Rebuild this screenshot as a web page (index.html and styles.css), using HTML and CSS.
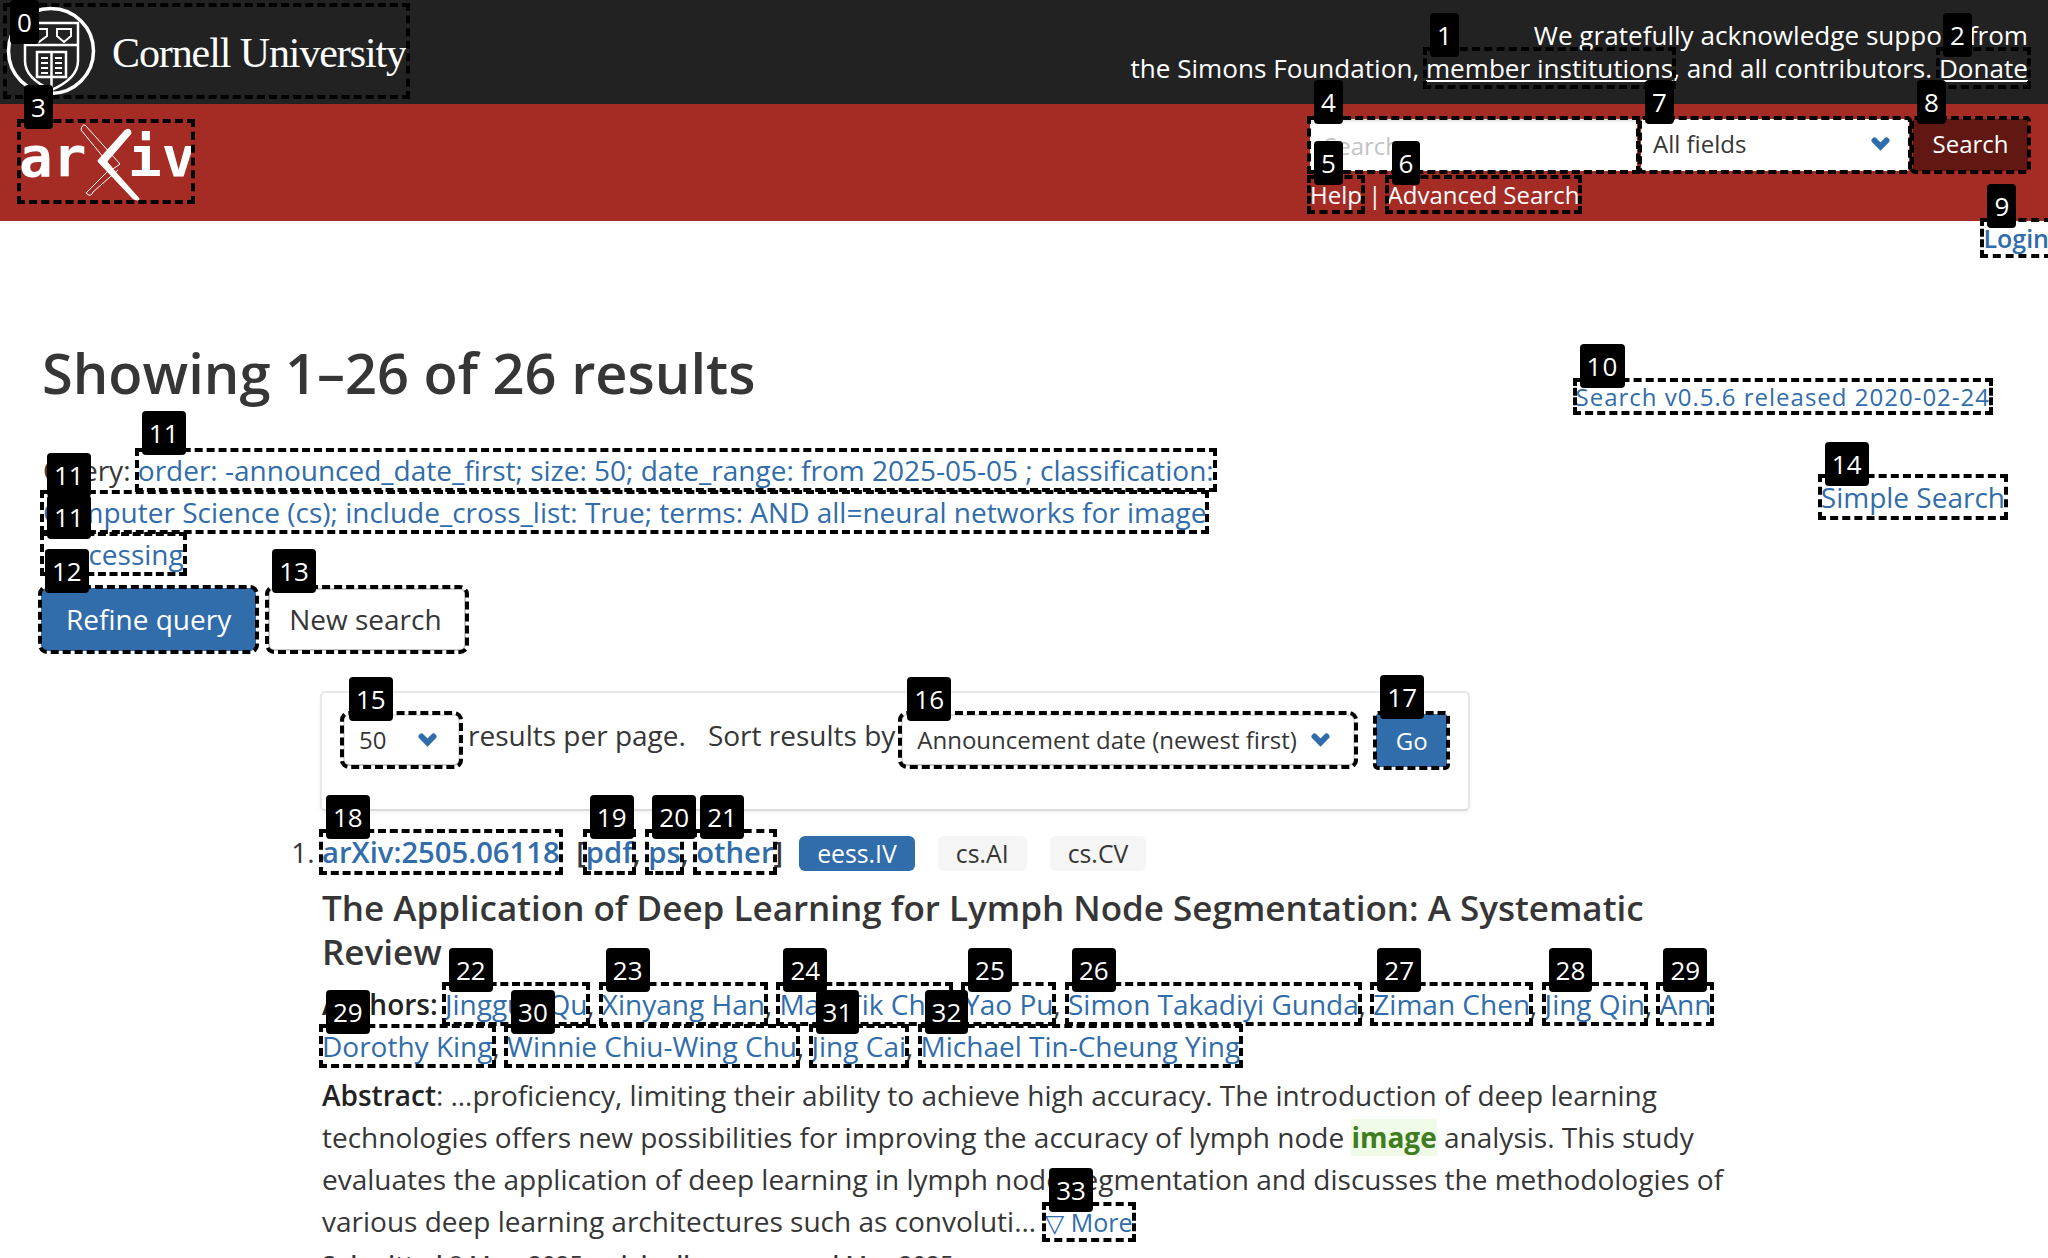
FILE: index.html
```html
<!DOCTYPE html>
<html lang="en">
<head>
    <meta charset="UTF-8">
    <meta name="viewport" content="width=device-width, initial-scale=1.0">
    <title>Search | arXiv e-print repository</title>
    <link rel="stylesheet" href="styles.css">
</head>
<body>
    <header>
        <div class="identity">
            <a class="cornell mark" href="#">
                <b class="badge badge-clamped">0</b>
                <svg class="seal" width="96" height="96" viewBox="0 0 96 96" fill="none" stroke="#fff">
                    <circle cx="48" cy="48" r="42.5" stroke-width="3.5"/>
                    <path d="M22 20H75V58C75 72 62 81 48.500 87C35 81 22 72 22 58Z" stroke-width="2.500"/>
                    <path d="M22 42H75" stroke-width="2.500"/>
                    <path d="M29 26H44V33L36 39L29 33ZM54 26H68V33L61 39L54 33Z" stroke-width="2"/>
                    <path d="M34 49H63V74H34ZM48.500 49V87" stroke-width="2.500"/>
                    <path d="M38 55H45M38 60H45M38 65H45M38 70H45M52 55H59M52 60H59M52 65H59M52 70H59" stroke-width="2"/>
                </svg>
                <span class="cornell-name">Cornell University</span>
            </a>
            <p class="support">
                We gratefully acknowledge support from<br>
                the Simons Foundation, <a class="mark" href="#"><b class="badge">1</b>member institutions</a>, and all contributors. <a class="mark" href="#"><b class="badge">2</b>Donate</a>
            </p>
        </div>
        <div class="masthead">
            <a class="arxiv-logo mark" href="#">
                <b class="badge">3</b>
                <svg class="logo-svg" width="172" height="79" viewBox="0 0 172 79">
                    <text class="logo-letters" x="-1" y="54">ar</text>
                    <text class="logo-letters" x="108" y="54">iv</text>
                    <path d="M65 3L100 42L93 47L61 8Q62 2 65 3ZM92 45L66 71Q71 76 73 70L98 48" fill="none" stroke="#fff" stroke-width="1"/>
                    <path d="M110 11L85 40L118 77L114 76L79 39L106 9Q110 7 110 11Z" fill="#fff" stroke="#fff" stroke-width="3" stroke-linejoin="round"/>
                </svg>
            </a>
            <div class="search-box">
                <form class="search-row">
                    <span class="mark search-field"><b class="badge">4</b><input class="search-input" type="text" placeholder="Search"></span>
                    <div class="select field-select mark"><b class="badge">7</b><span>All fields</span>
                        <svg class="chevron" width="19" height="14" viewBox="0 0 19 14"><path d="M3.500 3.500L9.500 9.500L15.500 3.500" fill="none" stroke="#2f6cab" stroke-width="6" stroke-linecap="round"/></svg>
                    </div>
                    <button class="search-button mark" type="button"><b class="badge">8</b>Search</button>
                </form>
                <p class="search-help"><a class="mark" href="#"><b class="badge">5</b>Help</a> | <a class="mark" href="#"><b class="badge">6</b>Advanced Search</a></p>
            </div>
        </div>
    </header>

    <div class="login-row"><a class="mark" href="#"><b class="badge">9</b>Login</a></div>

    <main>
        <div class="title-row">
            <h1>Showing 1–26 of 26 results</h1>
            <a class="release mark" href="#"><b class="badge">10</b>Search v0.5.6 released 2020-02-24</a>
        </div>

        <div class="query-row">
            <div class="query-col">
                <p class="query">Query: <a class="mark" href="#"><b class="badge">11</b>order: -announced_date_first; size: 50; date_range: from 2025-05-05 ; classification:</a><br>
                    <a class="mark" href="#"><b class="badge">11</b>Computer Science (cs); include_cross_list: True; terms: AND all=neural networks for image</a><br>
                    <a class="mark" href="#"><b class="badge">11</b>processing</a></p>
                <div class="query-buttons">
                    <a class="button button-blue mark" href="#"><b class="badge">12</b>Refine query</a>
                    <a class="button button-plain mark" href="#"><b class="badge">13</b>New search</a>
                </div>
            </div>
            <a class="simple-search mark" href="#"><b class="badge">14</b>Simple Search</a>
        </div>

        <div class="toolbar">
            <div class="select size-select mark"><b class="badge">15</b><span>50</span>
                <svg class="chevron" width="19" height="14" viewBox="0 0 19 14"><path d="M3.500 3.500L9.500 9.500L15.500 3.500" fill="none" stroke="#2f6cab" stroke-width="6" stroke-linecap="round"/></svg>
            </div>
            <span class="toolbar-label">results per page.</span>
            <span class="toolbar-label sort-label">Sort results by</span>
            <div class="select sort-select mark"><b class="badge">16</b><span>Announcement date (newest first)</span>
                <svg class="chevron" width="19" height="14" viewBox="0 0 19 14"><path d="M3.500 3.500L9.500 9.500L15.500 3.500" fill="none" stroke="#2f6cab" stroke-width="6" stroke-linecap="round"/></svg>
            </div>
            <button class="go-button mark" type="button"><b class="badge">17</b>Go</button>
        </div>

        <ol class="results">
            <li class="result">
                <div class="result-head">
                    <p class="result-links"><a class="mark" href="#"><b class="badge">18</b>arXiv:2505.06118</a>
                        <span class="formats">[<a class="mark" href="#"><b class="badge">19</b>pdf</a>, <a class="mark" href="#"><b class="badge">20</b>ps</a>, <a class="mark" href="#"><b class="badge">21</b>other</a>]</span></p>
                    <div class="tags">
                        <span class="tag tag-primary">eess.IV</span>
                        <span class="tag">cs.AI</span>
                        <span class="tag">cs.CV</span>
                    </div>
                </div>
                <h2 class="result-title">The Application of Deep Learning for Lymph Node Segmentation: A Systematic Review</h2>
                <p class="authors"><span class="label">Authors:</span>
                    <a class="mark" href="#"><b class="badge">22</b>Jingguo Qu</a>,
                    <a class="mark" href="#"><b class="badge">23</b>Xinyang Han</a>,
                    <a class="mark" href="#"><b class="badge">24</b>Man-Tik Choi</a>,
                    <a class="mark" href="#"><b class="badge">25</b>Yao Pu</a>,
                    <a class="mark" href="#"><b class="badge">26</b>Simon Takadiyi Gunda</a>,
                    <a class="mark" href="#"><b class="badge">27</b>Ziman Chen</a>,
                    <a class="mark" href="#"><b class="badge">28</b>Jing Qin</a>,
                    <a class="mark" href="#"><b class="badge">29</b>Ann</a>
                    <a class="mark" href="#"><b class="badge">29</b>Dorothy King</a>,
                    <a class="mark" href="#"><b class="badge">30</b>Winnie Chiu-Wing Chu</a>,
                    <a class="mark" href="#"><b class="badge">31</b>Jing Cai</a>,
                    <a class="mark" href="#"><b class="badge">32</b>Michael Tin-Cheung Ying</a>
                </p>
                <p class="abstract"><span class="label">Abstract</span>: …proficiency, limiting their ability to achieve high accuracy. The introduction of deep learning technologies offers new possibilities for improving the accuracy of lymph node <span class="match">image</span> analysis. This study evaluates the application of deep learning in lymph node segmentation and discusses the methodologies of various deep learning architectures such as convoluti… <a class="more mark" href="#"><b class="badge">33</b>▽ More</a></p>
                <p class="submitted"><span class="label">Submitted</span> 8 May, 2025; <span class="label">originally announced</span> May 2025.</p>
            </li>
        </ol>
    </main>
</body>
</html>
```

FILE: styles.css
```css
:root {
    --dark: #222222;
    --red: #a52b25;
    --dark-red: #611812;
    --blue: #316cab;
    --text: #363636;
}

* {
    box-sizing: border-box;
}

html,
body {
    height: 1258px;
    overflow: hidden;
}

body {
    margin: 0;
    font-family: "Open Sans", "Liberation Sans", sans-serif;
    font-size: 28px;
    line-height: 42px;
    color: var(--text);
    background: #fff;
}

a {
    color: var(--blue);
    text-decoration: none;
}

p,
h1,
h2 {
    margin: 0;
}

/* numbered overlay */
.mark {
    position: relative;
    outline: 4px dashed #000;
    outline-offset: -1px;
}

.badge {
    position: absolute;
    left: 4px;
    top: -37px;
    z-index: 10;
    padding: 0 7px;
    height: 44px;
    font-size: 26px;
    font-weight: 400;
    font-style: normal;
    line-height: 44px;
    color: #fff;
    background: #000;
    border-radius: 4px;
    white-space: nowrap;
}

.badge-clamped {
    top: -6px;
}

.query .badge {
    top: -40px;
}

.search-field .badge,
.select .badge,
.search-button .badge,
.go-button .badge {
    top: -39px;
}

.button .badge {
    top: -41px;
    left: 2px;
}

.simple-search .badge {
    top: -35px;
}

/* header */
.identity {
    height: 104px;
    background: var(--dark);
    display: flex;
    justify-content: space-between;
    padding: 6px 20px 0 6px;
}

.cornell {
    display: flex;
    align-items: center;
    height: 90px;
    width: 401px;
    color: #fff;
}

.seal {
    flex: none;
    margin-left: -3px;
}

.cornell-name {
    margin-left: 13px;
    padding-top: 4px;
    font-family: "Liberation Serif", serif;
    font-size: 42px;
    line-height: 50px;
    letter-spacing: -1.1px;
    white-space: nowrap;
}

.support {
    text-align: right;
    color: #fff;
    font-size: 26.100px;
    line-height: 33px;
    padding-top: 13px;
}

.support a {
    color: #fff;
    text-decoration: underline;
}

.masthead {
    height: 117px;
    background: var(--red);
    display: flex;
    justify-content: space-between;
    padding: 15px 20px 0 20px;
}

.arxiv-logo {
    display: block;
    width: 172px;
    height: 79px;
    margin-top: 3px;
}

.logo-svg {
    overflow: visible;
}

.logo-letters {
    font-family: "DejaVu Sans Mono", monospace;
    font-weight: 700;
    font-size: 56px;
    fill: #fff;
}

.search-row {
    display: flex;
    gap: 4px;
    height: 52px;
}

.search-field {
    display: block;
}

.search-input {
    display: block;
    width: 327px;
    height: 52px;
    padding: 0 14px;
    border: 0;
    font-family: inherit;
    font-size: 24px;
    background: #fff;
    box-shadow: inset 0 2px 3px rgba(0, 0, 0, 0.15);
    border-radius: 2px;
}

.search-input::placeholder {
    color: #c4c4c4;
}

.select {
    display: flex;
    align-items: center;
    justify-content: space-between;
    background: #fff;
    height: 52px;
    font-size: 24px;
    color: var(--text);
    white-space: nowrap;
}

.field-select {
    width: 268px;
    padding: 0 19px 2px 12px;
    border-radius: 2px;
}

.chevron {
    flex: none;
}

.search-button {
    width: 115px;
    height: 52px;
    padding: 0 0 4px;
    border: 0;
    border-radius: 2px;
    font-family: inherit;
    font-size: 24px;
    color: #fff;
    background: var(--dark-red);
}

.search-help {
    color: #fff;
    font-size: 24px;
    line-height: 34px;
    margin-top: 7px;
}

.search-help a {
    color: #fff;
}

.login-row {
    text-align: right;
    height: 37px;
    white-space: nowrap;
    font-weight: 600;
    font-size: 25px;
    line-height: 34px;
    margin-right: -1px;
}

/* main */
main {
    padding: 0 0 0 43px;
}

.title-row {
    display: flex;
    justify-content: space-between;
    align-items: flex-start;
    padding-right: 58px;
    margin-top: 76px;
}

h1 {
    font-size: 56px;
    font-weight: 600;
    line-height: 76px;
    margin-left: -1px;
}

.release {
    font-size: 24px;
    letter-spacing: 1px;
    line-height: 31px;
    margin-top: 47px;
}

.query-row {
    display: flex;
    justify-content: space-between;
    align-items: flex-start;
    padding-right: 43px;
    margin-top: 37px;
}

.query-col {
    width: 1230px;
}

.query {
    white-space: nowrap;
}

.query-buttons {
    display: flex;
    gap: 12px;
    margin: 13px 0 0 -2px;
}

.button {
    display: block;
    height: 63px;
    padding: 0 23px;
    line-height: 59px;
    font-size: 28px;
    color: var(--text);
    background: #fff;
    border: 2px solid #ccc;
    border-radius: 6px;
}

.button-blue {
    color: #fff;
    background: var(--blue);
    border-color: var(--blue);
}

.button-plain {
    padding: 0 22px 0 19px;
}

.simple-search {
    font-size: 28px;
    line-height: 40px;
    margin-top: 28px;
}

.toolbar {
    display: flex;
    align-items: flex-start;
    width: 1150px;
    height: 120px;
    margin: 40px 0 0 277px;
    padding: 21px 20px 0 21px;
    background: #fff;
    border: 2px solid #e8e8e8;
    border-bottom-color: #dcdcdc;
    border-radius: 5px;
    box-shadow: 0 2px 4px rgba(0, 0, 0, 0.06);
}

.size-select,
.sort-select {
    flex: none;
    border: 2px solid #e2e2e2;
    border-bottom-color: #ccc;
    border-radius: 6px;
    font-size: 24px;
}

.size-select {
    width: 117px;
    padding: 0 21px 0 14px;
}

.sort-select {
    width: 454px;
    padding: 0 23px 0 14px;
}

.toolbar-label {
    flex: none;
    white-space: nowrap;
    font-size: 28px;
    line-height: 42px;
    margin-left: 8px;
}

.sort-label {
    margin-left: 22px;
    margin-right: 6px;
}

.go-button {
    width: 71px;
    height: 53px;
    margin-left: 21px;
    padding: 0;
    border: 0;
    border-radius: 2px;
    font-family: inherit;
    font-size: 24px;
    color: #fff;
    background: var(--blue);
}

.results {
    margin: 20px 0 0;
    padding: 0 0 0 279px;
    width: 1702px;
}

.result-head {
    display: flex;
    align-items: center;
    gap: 16px;
}

.result-links {
    font-size: 29.200px;
    font-weight: 600;
    white-space: nowrap;
}

.formats {
    font-weight: 600;
    margin-left: 9px;
    color: var(--text);
}

.tags {
    display: flex;
    gap: 23px;
    margin-top: 2px;
}

.tag {
    height: 35px;
    padding: 0 18px;
    font-size: 24.800px;
    line-height: 35px;
    background: #f5f5f5;
    border-radius: 6px;
}

.tag-primary {
    color: #fff;
    background: var(--blue);
}

.result-title {
    font-size: 35px;
    font-weight: 600;
    line-height: 44px;
    margin-top: 13px;
}

.authors {
    margin-top: 9px;
}

.abstract {
    margin-top: 7px;
}

.label {
    font-weight: 600;
}

.authors .label,
.abstract .label {
    color: #222;
}

.match {
    display: inline-block;
    line-height: 37px;
    font-weight: 700;
    color: #3f7d20;
    background: #effbe7;
}

.more {
    font-size: 25px;
    margin-left: 2px;
}

.submitted {
    font-size: 24px;
}
```
